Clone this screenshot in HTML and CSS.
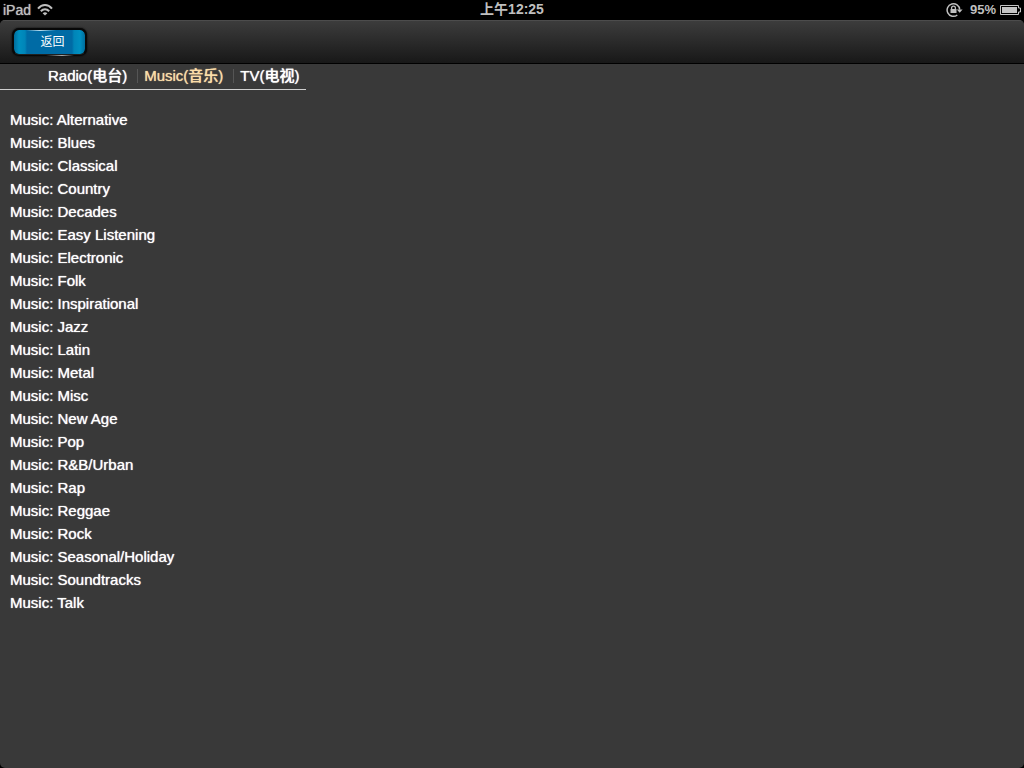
FILE: index.html
```html
<!DOCTYPE html>
<html lang="zh-CN">
<head>
  <meta charset="UTF-8" />
  <meta name="viewport" content="width=device-width, initial-scale=1.0"/>
  <title>Music(音乐)</title>
  <link rel="stylesheet" href="styles.css">
</head>
<body>

  <div class="status-bar">
    <div class="status-left">
      <span>iPad</span>
      <svg class="wifi" width="16" height="12" viewBox="0 0 16 12" fill="none" stroke="#bfbfbf" stroke-width="2">
        <path d="M1 4.6C5-.2 11-.2 15 4.6"/>
        <path d="M3.8 7.3C6.3 4.6 9.7 4.6 12.2 7.3"/>
        <path d="M8 11.6L5.6 9.2Q8 7.2 10.4 9.2Z" fill="#bfbfbf" stroke="none"/>
      </svg>
    </div>
    <div class="status-time">上午12:25</div>
    <div class="status-right">
      <svg class="lock" width="17" height="16" viewBox="0 0 17 16" fill="none" stroke="#bfbfbf">
        <path d="M11.3 13A6.3 6.3 0 1 1 13.7 7.6" stroke-width="1.5"/>
        <path d="M10.8 7.4H16.6L13.7 10.8Z" fill="#bfbfbf" stroke="none"/>
        <path d="M5.6 7.5V6a1.9 1.9 0 0 1 3.8 0V7.5" stroke-width="1.3"/>
        <rect x="4.5" y="7" width="6" height="4" fill="#bfbfbf" stroke="none"/>
      </svg>
      <span class="percent">95%</span>
      <svg class="battery" width="21" height="10" viewBox="0 0 21 10">
        <path d="M.5.5H18.5V3H20.5V7H18.5V9.5H.5Z" fill="none" stroke="#c4c4c4"/>
        <rect x="2" y="2" width="15" height="6" fill="#c4c4c4"/>
      </svg>
    </div>
  </div>

  <div class="page">
    <header class="toolbar">
      <button type="button" class="back-btn">返回</button>
    </header>

    <nav class="tabs">
      <ul>
        <li><a href="#radio">Radio(电台)</a></li>
        <li><a href="#music" class="active">Music(音乐)</a></li>
        <li><a href="#tv">TV(电视)</a></li>
      </ul>
    </nav>

    <main>
      <ul class="genres">
        <li><a href="#alternative">Music: Alternative</a></li>
        <li><a href="#blues">Music: Blues</a></li>
        <li><a href="#classical">Music: Classical</a></li>
        <li><a href="#country">Music: Country</a></li>
        <li><a href="#decades">Music: Decades</a></li>
        <li><a href="#easy-listening">Music: Easy Listening</a></li>
        <li><a href="#electronic">Music: Electronic</a></li>
        <li><a href="#folk">Music: Folk</a></li>
        <li><a href="#inspirational">Music: Inspirational</a></li>
        <li><a href="#jazz">Music: Jazz</a></li>
        <li><a href="#latin">Music: Latin</a></li>
        <li><a href="#metal">Music: Metal</a></li>
        <li><a href="#misc">Music: Misc</a></li>
        <li><a href="#new-age">Music: New Age</a></li>
        <li><a href="#pop">Music: Pop</a></li>
        <li><a href="#rnb-urban">Music: R&amp;B/Urban</a></li>
        <li><a href="#rap">Music: Rap</a></li>
        <li><a href="#reggae">Music: Reggae</a></li>
        <li><a href="#rock">Music: Rock</a></li>
        <li><a href="#seasonal">Music: Seasonal/Holiday</a></li>
        <li><a href="#soundtracks">Music: Soundtracks</a></li>
        <li><a href="#talk">Music: Talk</a></li>
      </ul>
    </main>
  </div>

</body>
</html>
```

FILE: styles.css
```css
* {
  box-sizing: border-box;
}

body {
  margin: 0;
  min-height: 100vh;
  display: flex;
  flex-direction: column;
  background: #000;
  color: #fff;
  font-family: "Liberation Sans", Arial, "Noto Sans CJK SC", sans-serif;
  font-size: 15px;
}

ul {
  list-style: none;
  margin: 0;
  padding: 0;
}

a {
  color: inherit;
  text-decoration: none;
}

.tabs a,
.genres a,
.status-left span {
  text-shadow: 0 0 1px currentColor;
}

/* status bar */
.status-bar {
  display: grid;
  grid-template-columns: 1fr auto 1fr;
  align-items: center;
  height: 20px;
  padding: 0 3px;
  color: #bfbfbf;
  font-size: 13px;
  line-height: 18px;
}

.status-left,
.status-right {
  display: flex;
  align-items: center;
  height: 18px;
}

.status-left {
  gap: 6px;
  font-size: 14px;
}

.status-time {
  height: 20px;
  font-size: 14px;
  font-weight: bold;
}

.status-right {
  justify-content: flex-end;
}

.percent {
  margin: 0 4px 0 7px;
  font-weight: bold;
}

.page {
  flex: 1;
  background: #393939;
  border-radius: 5px;
  overflow: hidden;
}

.toolbar {
  height: 44px;
  padding: 7px 12px;
  background: linear-gradient(#3c3c3c, #181818);
  border-top: 1px solid #4c4c4c;
  border-bottom: 1px solid #000;
}

.back-btn {
  display: block;
  width: 75px;
  height: 28px;
  padding: 0 0 0 6px;
  border: 2px solid #080808;
  border-radius: 7px;
  /* shine on the top and bottom edges, then the blue body */
  background:
    linear-gradient(90deg, transparent 12px, #b8dcec 26px, transparent 42px) top / 100% 1px no-repeat padding-box,
    linear-gradient(90deg, transparent 34px, #aaa 50px, transparent 62px) bottom / 100% 1px no-repeat border-box,
    linear-gradient(90deg, #006d9c, #008fc0 5px, #0085b8 11px, #006ba5 13px, #006ba5 58px, #0085b8 60px, #008fc0 66px, #006d9c) padding-box;
  border-color: #080808 #080808 transparent;
  background-color: #080808;
  box-shadow: 0 0 2px #000;
  color: #fff;
  font-family: "Liberation Sans", Arial, "Noto Sans CJK SC", sans-serif;
  font-size: 12px;
  line-height: 24px;
  cursor: pointer;
}

.tabs {
  width: fit-content;
  padding: 0 6px 1px 42px;
  border-bottom: 1px solid #d0d0d0;
}

.tabs ul {
  display: flex;
}

.tabs li {
  display: flex;
  align-items: center;
  padding: 0 0 0 6px;
  font-weight: 500;
  line-height: 24px;
}

/* separator between tabs */
.tabs li + li::before {
  content: "";
  width: 1px;
  height: 14px;
  margin: 0 6px 0 4px;
  background: #555;
}

.tabs .active {
  color: #fbdda8;
}

.genres {
  padding: 18px 10px;
}

.genres li {
  line-height: 23px;
}
```
